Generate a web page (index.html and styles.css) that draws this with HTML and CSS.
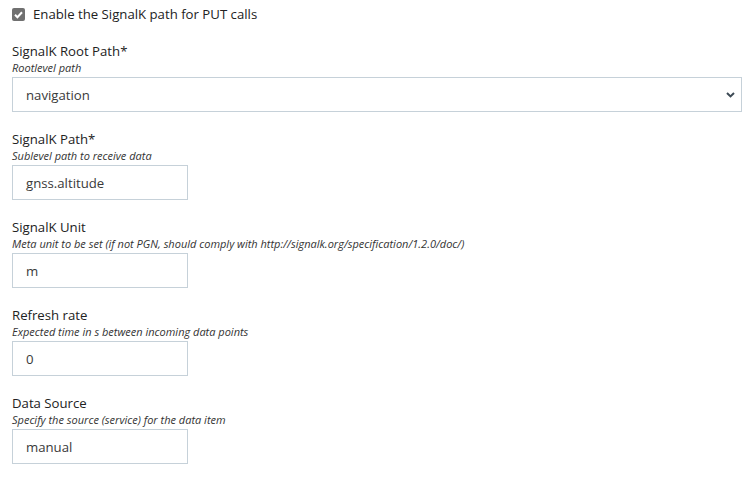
FILE: index.html
```html
<!DOCTYPE html>
<html>
<head>
<meta charset="utf-8">
<link rel="stylesheet" href="styles.css">
</head>
<body>
<form class="form">
  <label class="check-row">
    <span class="checkbox"><svg viewBox="0 0 13 13" width="13" height="13"><path d="M3 6.8 L5.4 9.2 L10 4.2" fill="none" stroke="#fff" stroke-width="2"/></svg></span>
    <span class="check-label">Enable the SignalK path for PUT calls</span>
  </label>

  <div class="group">
    <div class="label">SignalK Root Path*</div>
    <div class="help">Rootlevel path</div>
    <div class="select">
      <span>navigation</span>
      <svg class="chev" viewBox="0 0 9 6" width="9" height="6"><path d="M1 1 L4.5 4.4 L8 1" fill="none" stroke="#3d4a55" stroke-width="2"/></svg>
    </div>
  </div>

  <div class="group">
    <div class="label">SignalK Path*</div>
    <div class="help">Sublevel path to receive data</div>
    <div class="input">gnss.altitude</div>
  </div>

  <div class="group">
    <div class="label">SignalK Unit</div>
    <div class="help">Meta unit to be set (if not PGN, should comply with http://signalk.org/specification/1.2.0/doc/)</div>
    <div class="input">m</div>
  </div>

  <div class="group">
    <div class="label">Refresh rate</div>
    <div class="help">Expected time in s between incoming data points</div>
    <div class="input">0</div>
  </div>

  <div class="group">
    <div class="label">Data Source</div>
    <div class="help">Specify the source (service) for the data item</div>
    <div class="input">manual</div>
  </div>
</form>
</body>
</html>
```

FILE: styles.css
```css
html, body {
  margin: 0;
  padding: 0;
  background: #fff;
}
body {
  font-family: "Open Sans", "Noto Sans", sans-serif;
  color: #222;
}
.form {
  display: flex;
  flex-direction: column;
  padding: 3px 11px 0 12px;
}
.check-row {
  display: flex;
  align-items: center;
  gap: 8px;
  height: 22px;
  font-size: 13.2px;
  color: #222;
}
.checkbox {
  width: 13px;
  height: 13px;
  border-radius: 2px;
  background: #707070;
  display: flex;
}
.group {
  display: flex;
  flex-direction: column;
  margin-top: 16px;
}
.group + .group {
  margin-top: 17px;
}
.label {
  font-size: 13.2px;
  line-height: 20px;
  height: 20px;
}
.help {
  font-size: 11px;
  font-style: italic;
  line-height: 14px;
  height: 14px;
  color: #333;
  margin-bottom: 2px;
  white-space: nowrap;
}
.select, .input {
  box-sizing: border-box;
  height: 35px;
  border: 1px solid #c6d1d9;
  display: flex;
  align-items: center;
  padding: 0 13px;
  font-size: 13.2px;
  color: #3a3a3a;
}
.select {
  justify-content: space-between;
  padding-right: 6px;
}
.input {
  width: 176px;
}
.chev {
  display: block;
}
```
